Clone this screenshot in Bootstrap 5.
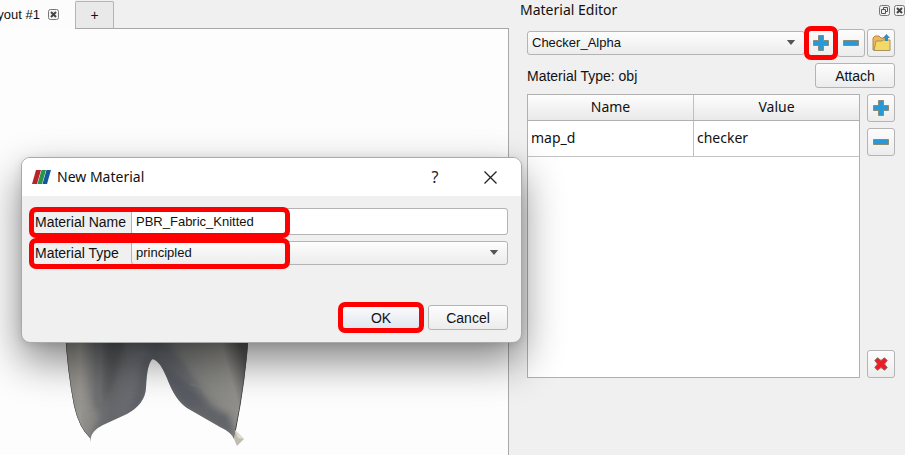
<!DOCTYPE html>
<html lang="en">
<head>
<meta charset="utf-8">
<meta name="viewport" content="width=device-width, initial-scale=1">
<title>Material Editor</title>
<link href="https://cdn.jsdelivr.net/npm/bootstrap@5.3.0/dist/css/bootstrap.min.css" rel="stylesheet">
<style>
body { background: #f0f0f0; color: #111; font-family: "Liberation Sans", Arial, sans-serif; font-size: 14px; line-height: 20px; }
.humanist { font-family: "Noto Sans", "Open Sans", sans-serif; }
.tab-strip { height: 29px; }
.tab-open { width: 75px; padding-right: 16px; gap: 8px; background: #fcfcfc; white-space: nowrap; color: #111; font-size: 13px; }
.tab-rest { border-bottom: 1px solid #a8a8a8; }
.tab-add { width: 39px; margin-top: 1px; border: 1px solid #b4b4b4; border-bottom: 0; border-radius: 2px 2px 0 0; background: #e9e9e9; color: #111; }
.viewport { background: #fdfdfd; border-right: 1px solid #a8a8a8; padding-left: 60px; }
.editor { width: 396px; padding: 0 10px 0 18px; }
.editor-head { margin: 0 -10px 0 -7px; height: 19px; }
.editor-title { font-size: 14px; line-height: 19px; }
.tool { width: 28px; height: 28px; }
.push { border: 1px solid #b4b4b4; border-radius: 3px; background: linear-gradient(#fdfdfd, #ececec); color: #111; padding: 0; line-height: 20px; }
.push:hover { background: linear-gradient(#fff, #e4e8ec); }
.push-ok { background: linear-gradient(#fbfcfd, #dfe6ee); }
.push-wide { width: 80px; height: 25px; }
.combo { height: 24px; padding: 0 28px 0 4px; border: 1px solid #b4b4b4; border-radius: 3px; color: #111; font-size: 13px; line-height: 20px;
  background: url("data:image/svg+xml,%3Csvg xmlns='http://www.w3.org/2000/svg' viewBox='0 0 10 6'%3E%3Cpath d='M0 0h10L5 6z' fill='%23555'/%3E%3C/svg%3E") no-repeat right 8px center / 10px 5px, linear-gradient(#fdfdfd, #ececec); }
.entry { height: 27px; padding: 0 4px; border: 1px solid #b4b4b4; border-radius: 3px; color: #111; font-size: 13px; }
.ring { position: relative; }
.ring::after { content: ""; position: absolute; inset: -3px; border: 5px solid #f00; border-radius: 7px; pointer-events: none; z-index: 2; }
.pick-row { height: 29px; margin-top: 9px; gap: 2px; }
.type-row { height: 25px; margin-top: 6px; }
.grid-area { margin-top: 6px; gap: 7px; }
.grid-box { border: 1px solid #b0b0b0; background: #fff; height: 284px; }
.props { table-layout: fixed; }
.props th { height: 25px; font-weight: 400; text-align: center; padding: 0; background: linear-gradient(#fdfdfd, #e9e9e9); border-bottom: 1px solid #b0b0b0; }
.props td { height: 36px; padding: 0 3px; border-bottom: 1px solid #c4c4c4; }
.props th + th, .props td + td { border-left: 1px solid #c0c0c0; }
.grid-tools { gap: 6px; }
.prompt { position: absolute; left: 21px; top: 157px; width: 501px; max-width: calc(100vw - 42px); border: 1px solid #a9a9a9; border-radius: 9px; background: #f0f0f0; box-shadow: 0 18px 42px rgba(0, 0, 0, .48), 0 2px 10px rgba(0, 0, 0, .1); z-index: 10; }
.prompt-head { height: 38px; background: #fff; border-radius: 8px 8px 0 0; padding: 0 23px 0 10px; }
.prompt-title { font-size: 14px; margin-left: 6px; }
.prompt-body { padding: 12px 13px 12px 12px; }
.head-btn { background: none; border: 0; padding: 0; width: 14px; color: #222; }
.head-help { margin-right: 42px; }
.field-label { width: 97px; font-size: 14px; padding-left: 1px; }
.field { min-height: 27px; position: relative; }
.field + .field { margin-top: 4px; }
.field-mark { position: absolute; left: -5px; width: 261px; top: -1px; bottom: -3px; border: 5px solid #f00; border-radius: 7px; pointer-events: none; }
.prompt-actions { margin-top: 39px; gap: 7px; }
</style>
<script src="https://cdn.jsdelivr.net/npm/bootstrap@5.3.0/dist/js/bootstrap.bundle.min.js"></script>
</head>
<body>
<svg class="d-none" aria-hidden="true">
  <symbol id="plus" viewBox="0 0 16 16"><path d="M5.500 .5h5v5h5v5h-5v5h-5v-5h-5v-5h5z" fill="#2799d8" stroke="#8b8a72"/></symbol>
  <symbol id="minus" viewBox="0 0 16 16"><path d="M.5 5.500h15v5h-15z" fill="#2799d8" stroke="#8b8a72"/></symbol>
  <symbol id="shut" viewBox="0 0 11 11"><rect x=".5" y=".5" width="10" height="10" rx="2" fill="#f4f4f4" stroke="#777"/><path d="M3 3l5 5M8 3L3 8" stroke="#444" stroke-width="2"/></symbol>
</svg>
<div class="d-flex min-vh-100">
  <main class="flex-fill d-flex flex-column">
    <div class="tab-strip d-flex">
      <a href="#" class="tab-open d-flex align-items-center justify-content-end overflow-hidden text-decoration-none flex-shrink-0">Layout #1
        <svg width="11" height="11" class="flex-shrink-0"><use href="#shut"/></svg></a>
      <div class="tab-rest d-flex flex-fill"><button class="tab-add" aria-label="New layout">+</button></div>
    </div>
    <div class="viewport flex-fill d-flex align-items-end">
      <svg width="192" height="125" viewBox="60 330 192 125" role="img" aria-label="Cloth model">
        <defs>
          <linearGradient id="cl" x1="65" x2="150" y1="0" y2="0" gradientUnits="userSpaceOnUse"><stop offset="0" stop-color="#8b8a85"/><stop offset=".18" stop-color="#989792"/><stop offset=".36" stop-color="#707173"/><stop offset=".55" stop-color="#66676a"/><stop offset="1" stop-color="#6e7179"/></linearGradient>
          <linearGradient id="cr" x1="160" x2="249" y1="400" y2="375" gradientUnits="userSpaceOnUse"><stop offset="0" stop-color="#65686f"/><stop offset=".42" stop-color="#81827f"/><stop offset=".8" stop-color="#908f8b"/><stop offset="1" stop-color="#545555"/></linearGradient>
          <filter id="soft"><feGaussianBlur stdDeviation="3"/></filter>
          <clipPath id="shape"><path d="M65 330 Q67 370 74 406 Q79 428 90 438 V442 L91 437 Q93 430 103 425 L127 414 Q145 404 146 388 Q147 362 153 359 Q160 361 167 378 Q175 400 187 408 L220 427 Q231 432 234 439 L236 430 Q246 380 249 330Z"/></clipPath>
        </defs>
        <g clip-path="url(#shape)">
          <path d="M60 330h93v125H60z" fill="url(#cl)"/>
          <path d="M153 330h100v125H153z" fill="url(#cr)"/>
          <path d="M106 330h18q-1 42-20 72z" fill="#4c4e50" opacity=".5" filter="url(#soft)"/>
          <path d="M135 330h20l30 35 28 42-34-4z" fill="#5d6067" opacity=".6" filter="url(#soft)"/>
          <path d="M157 360l32 25 18 19 22 11 7 24-48-29-20-25z" fill="#55585f" opacity=".75" filter="url(#soft)"/>
          <path d="M66 342q5 48 23 94l11-20-9-12-9-28z" fill="#96948d" opacity=".5" filter="url(#soft)"/>
          <path d="M141 362q9-10 14-2l-7 22q-2 25-20 32 12-22 13-52z" fill="#4c4e54" opacity=".45" filter="url(#soft)"/>
          <path d="M190 384l12 3 5 8 11 5 4 8 10 4 3 10M86 410l10 2-6 6 8 1" stroke="#858580" stroke-width="2" fill="none" opacity=".3"/>
          <path d="M65 330Q67 370 74 406Q79 428 90 438M249 330Q246 380 234 438" stroke="#444546" stroke-width="1" fill="none"/>
        </g>
        <path d="M235 430l9 9-7 7-3-7z" fill="#bfbcb1"/><path d="M235 430l9 9-6-1z" fill="#dedace"/>
      </svg>
    </div>
  </main>

  <aside class="editor flex-shrink-0">
    <header class="editor-head d-flex justify-content-between align-items-center">
      <h1 class="editor-title humanist fw-normal m-0">Material Editor</h1>
      <div class="d-flex gap-1">
        <button class="border-0 bg-transparent p-0 lh-1" aria-label="Float panel"><svg width="11" height="11" viewBox="0 0 11 11" fill="none" stroke="#777"><rect x=".5" y=".5" width="10" height="10" rx="2"/><path d="M4.500 4V2.500h4v4H7M2.500 4.500h4v4h-4z" stroke="#555"/></svg></button>
        <button class="border-0 bg-transparent p-0 lh-1" aria-label="Close panel"><svg width="11" height="11"><use href="#shut"/></svg></button>
      </div>
    </header>
    <div class="pick-row d-flex align-items-center">
      <select class="form-select combo flex-fill" aria-label="Material"><option>Checker_Alpha</option></select>
      <div class="ring"><button class="push tool d-flex align-items-center justify-content-center" aria-label="Add material"><svg width="16" height="16"><use href="#plus"/></svg></button></div>
      <button class="push tool d-flex align-items-center justify-content-center flex-shrink-0" aria-label="Remove material"><svg width="16" height="16"><use href="#minus"/></svg></button>
      <button class="push tool d-flex align-items-center justify-content-center flex-shrink-0" aria-label="Load materials"><svg width="19" height="18" viewBox="0 0 19 18"><path d="M1 16V4l2-2h4l2 2h5v12z" fill="#f2b45c" stroke="#b08a4a"/><path d="M4 7h6l1-1h7v10.500H2z" fill="#f3da68" stroke="#a8935a"/><path d="M14.500 0l3.500 4h-2v3h-3V4h-2z" fill="#2d8fc4"/></svg></button>
    </div>
    <div class="type-row d-flex align-items-center justify-content-between">
      <span>Material Type: obj</span>
      <button class="push push-wide">Attach</button>
    </div>
    <div class="grid-area d-flex">
      <div class="grid-box flex-fill">
        <table class="props humanist w-100">
          <thead><tr><th scope="col">Name</th><th scope="col">Value</th></tr></thead>
          <tbody><tr><td>map_d</td><td>checker</td></tr></tbody>
        </table>
      </div>
      <div class="grid-tools d-flex flex-column">
        <button class="push tool d-flex align-items-center justify-content-center" aria-label="Add property"><svg width="16" height="16"><use href="#plus"/></svg></button>
        <button class="push tool d-flex align-items-center justify-content-center" aria-label="Remove property"><svg width="16" height="16"><use href="#minus"/></svg></button>
        <button class="push tool d-flex align-items-center justify-content-center mt-auto" aria-label="Remove all properties"><svg width="14" height="14" viewBox="0 0 14 14"><path d="M3.500 .8L7 3.500l3.500-2.700 2.700 2.700L10.500 7l2.700 3.500-2.700 2.700L7 10.500l-3.500 2.700L.8 10.500 3.500 7 .8 3.500z" fill="#ee1c25" stroke="#8f6a5a"/></svg></button>
      </div>
    </div>
  </aside>
</div>

<section class="prompt" role="dialog" aria-labelledby="prompt-title">
  <header class="prompt-head d-flex align-items-center">
    <svg width="19" height="14" viewBox="0 0 19 14"><path d="M4 0h5L5 14H0z" fill="#b8242c"/><path d="M9.500 0h4.500l-4 14H5.500z" fill="#27954a"/><path d="M14.500 0H19l-4 14h-4.500z" fill="#16569c"/></svg>
    <h2 id="prompt-title" class="prompt-title humanist fw-normal mb-0 me-auto">New Material</h2>
    <button class="head-btn head-help humanist fs-6" aria-label="Help">?</button>
    <button class="head-btn d-flex" aria-label="Close"><svg width="13" height="13" viewBox="0 0 13 13"><path d="M.5 .5l12 12M12.500 .5l-12 12" stroke="#222" stroke-width="1.300"/></svg></button>
  </header>
  <form class="prompt-body">
    <div class="field d-flex align-items-center">
      <label class="field-label flex-shrink-0" for="mat-name">Material Name</label>
      <input id="mat-name" class="form-control entry" type="text" value="PBR_Fabric_Knitted">
      <span class="field-mark"></span>
    </div>
    <div class="field d-flex align-items-center">
      <label class="field-label flex-shrink-0" for="mat-type">Material Type</label>
      <select id="mat-type" class="form-select combo"><option>principled</option></select>
      <span class="field-mark"></span>
    </div>
    <div class="prompt-actions d-flex justify-content-end">
      <div class="ring"><button type="button" class="push push-wide push-ok">OK</button></div>
      <button type="button" class="push push-wide">Cancel</button>
    </div>
  </form>
</section>
</body>
</html>
